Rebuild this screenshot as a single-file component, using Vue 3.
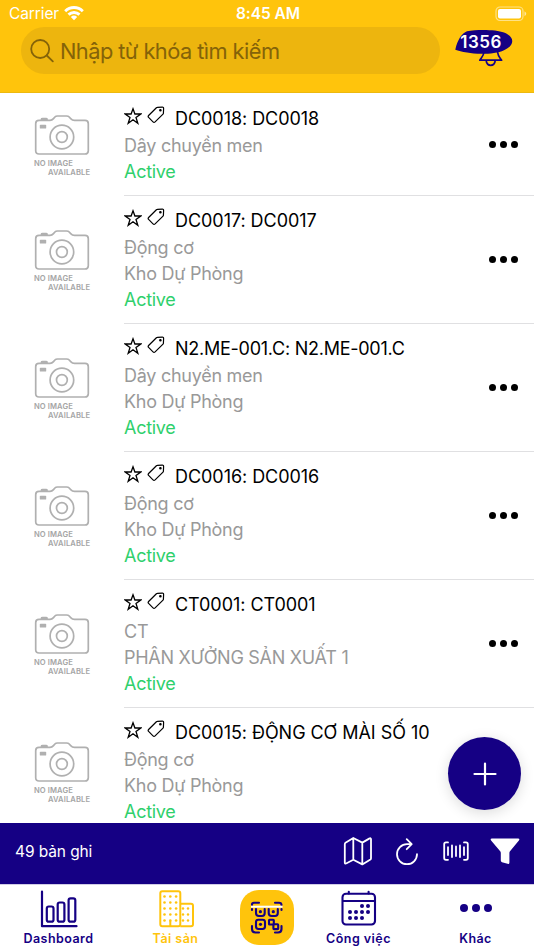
<script setup>
const assets = [
  { title: 'DC0018: DC0018', lines: ['Dây chuyền men'] },
  { title: 'DC0017: DC0017', lines: ['Động cơ', 'Kho Dự Phòng'] },
  { title: 'N2.ME-001.C: N2.ME-001.C', lines: ['Dây chuyền men', 'Kho Dự Phòng'], tight: true },
  { title: 'DC0016: DC0016', lines: ['Động cơ', 'Kho Dự Phòng'] },
  { title: 'CT0001: CT0001', lines: ['CT', 'PHÂN XƯỞNG SẢN XUẤT 1'] },
  { title: 'DC0015: ĐỘNG CƠ MÀI SỐ 10', lines: ['Động cơ', 'Kho Dự Phòng'] }
]
const towerDots = [6.5, 12.5, 18.5, 24.5, 30.5]
const annexDots = [18.5, 24.5, 30.5]
const calendarDots = [[21, 15.5], [27, 15.5], [9, 21.5], [15, 21.5], [21, 21.5], [27, 21.5], [9, 27.5], [15, 27.5], [21, 27.5]]
</script>

<template>
  <div class="screen">
    <header class="header">
      <div class="status">
        <div class="carrier">
          <span>Carrier</span>
          <svg width="20" height="15" viewBox="0 0 20 15" fill="none" stroke="#fff" stroke-width="2.9">
            <path d="M1.2 5.2C6.2.3 13.8.3 18.8 5.2" />
            <path d="M4.5 8.6C7.6 5.7 12.4 5.7 15.5 8.6" />
            <path d="M10 14.2 6.8 10.9Q10 8.3 13.2 10.9Z" fill="#fff" stroke="none" />
          </svg>
        </div>
        <span class="time">8:45 AM</span>
        <svg class="battery" width="32" height="16" viewBox="0 0 32 16">
          <rect x="1" y="1" width="27" height="13.5" rx="4" fill="none" stroke="#fff" stroke-opacity=".5" stroke-width="1.2" />
          <rect x="3" y="3" width="23" height="9.5" rx="2" fill="#fff" />
          <path d="M29.5 5.2Q33 7.7 29.5 10.2Z" fill="#fff" fill-opacity=".6" />
        </svg>
      </div>
      <div class="search-row">
        <div class="search">
          <svg width="24" height="24" viewBox="0 0 24 24" fill="none" stroke="#846309" stroke-width="1.8" stroke-linecap="round">
            <circle cx="10.2" cy="10" r="9" />
            <path d="m16.8 16.5 6 5.9" />
          </svg>
          <span>Nhập từ khóa tìm kiếm</span>
        </div>
        <div class="bell">
          <svg width="60" height="40" viewBox="0 0 60 40">
            <path d="M29 25C28.5 29 27 30 24.8 33.2H46.6C44.3 30 43 29 42.5 25M31.2 34C32.2 39.7 39.2 39.7 40.2 34" fill="none" stroke="#150084" stroke-width="1.7" stroke-linejoin="round" />
            <path d="M.3 22.7C2.5 12.5 7 6 12 4.2C22 2.4 41 2.4 49 5.5C60 9.7 60 18.5 49 23.2C40 27.5 22 27.5 12 25.6C7 24.7 3.5 23.8 .3 22.7Z" fill="#150084" />
          </svg>
          <span class="count">1356</span>
        </div>
      </div>
    </header>

    <main class="list">
      <article v-for="asset in assets" :key="asset.title" class="asset">
        <div class="thumb">
          <svg width="56" height="41" viewBox="0 0 56 41" fill="none" stroke="#b0b0b0" stroke-width="1.7">
            <path d="M5 5.4H16Q18 5.4 19.5 3.6L20.9 2Q21.8 1 23.5 1H32.5Q34.3 1 35.2 2L36.7 3.6Q38.3 5.4 40.5 5.4H51Q54.3 5.4 54.3 8.7V35.7Q54.3 39 51 39H5Q1.7 39 1.7 35.7V8.7Q1.7 5.4 5 5.4Z" />
            <circle cx="27.9" cy="22" r="11.8" />
            <circle cx="27.9" cy="22" r="5.4" />
            <path d="M7.5 5V4Q7.5 3.5 8.5 3.5H12Q13 3.5 13 4V5Z" fill="#b0b0b0" />
            <rect x="5.8" y="9.8" width="6.4" height="3.8" rx=".7" fill="#b0b0b0" stroke="none" />
          </svg>
          <div class="no-image">NO IMAGE</div>
          <div class="no-image available">AVAILABLE</div>
        </div>
        <div class="body">
          <div class="info">
            <div class="title-row">
              <svg class="star" width="18" height="18" viewBox="0 0 18 18" fill="none" stroke="#000" stroke-width="1.3" stroke-linejoin="miter">
                <path d="M9 1.8 10.9 7H16.8L12 10.5 13.8 16.2 9 12.7 4.2 16.2 6 10.5 1.2 7H7.1Z" />
              </svg>
              <svg class="tag" width="18" height="18" viewBox="0 0 18 18" fill="none" stroke="#000" stroke-width="1.2" stroke-linejoin="round">
                <path d="M10.2 1.4 15.3 1.1Q16.6 1 16.6 2.4L16.4 7.2Q16.4 7.7 16 8.1L8.1 15.9Q7 16.9 6 15.9L1.6 11.4Q.7 10.4 1.6 9.5L9.4 1.8Q9.7 1.4 10.2 1.4Z" />
                <circle cx="13.4" cy="4.3" r=".7" fill="#000" />
              </svg>
              <span class="title" :class="{ tight: asset.tight }">{{ asset.title }}</span>
            </div>
            <div v-for="line in asset.lines" :key="line" class="line">{{ line }}</div>
            <div class="line active">Active</div>
          </div>
          <div class="more"><i /><i /><i /></div>
        </div>
      </article>
      <button class="add" aria-label="+">
        <svg width="24" height="24" viewBox="0 0 24 24" stroke="#fff" stroke-width="2.2" stroke-linecap="round">
          <path d="M12 1.5V22.5M1.5 12H22.5" />
        </svg>
      </button>
    </main>

    <div class="toolbar">
      <span class="records">49 bản ghi</span>
      <div class="tools">
        <svg class="map" width="30" height="30" viewBox="0 0 30 30" fill="none" stroke="#fff" stroke-width="1.8" stroke-linejoin="round">
          <path d="M1.8 8.2Q1.8 7.3 2.5 6.8L10.3 2 19.3 6.6 26.2 2.6Q28 1.6 28 3.2V22.2Q28 23 27.4 23.4L19.3 28.4 10.3 23.8 3.6 27.3Q1.8 28.2 1.8 26.6ZM10.3 2V23.8M19.3 6.6V28" />
        </svg>
        <svg class="refresh" width="24" height="30" viewBox="0 0 24 30" fill="none" stroke="#fff" stroke-width="1.8" stroke-linecap="round" stroke-linejoin="round">
          <path d="M16.3 8.2H12A10 10 0 1 0 22 18.2M11.7 3.2 16.7 8.2 11.7 13.2" />
        </svg>
        <svg class="barcode" width="26" height="30" viewBox="0 0 26 30" fill="none" stroke="#fff" stroke-width="1.8" stroke-linecap="round" stroke-linejoin="round">
          <path d="M5 6.4H3Q1.2 6.4 1.2 8.2V22Q1.2 23.8 3 23.8H5M21 6.4H23Q24.8 6.4 24.8 8.2V22Q24.8 23.8 23 23.8H21M5 11.2V19M9 9.5V21M13 10.4V20M17 9.5V21M21 11.2V19" />
        </svg>
        <svg width="30" height="30" viewBox="0 0 30 30" fill="#fff">
          <path d="M2 2.5H28Q30.2 2.6 28.9 4.4L20 15.3Q19.4 16.1 19.4 17V26.4Q19.4 28.3 17.6 27.8L12 26.2Q10.8 25.8 10.8 24.6V17Q10.8 16.1 10.2 15.3L1.1 4.4Q-.2 2.6 2 2.5Z" />
        </svg>
      </div>
    </div>

    <nav class="tabs">
      <div class="tab dashboard">
        <svg width="38" height="38" viewBox="0 0 38 38" fill="none" stroke="#150084" stroke-width="2.2" stroke-linecap="round" stroke-linejoin="round">
          <path d="M2 1.5V36.2H36.5" />
          <rect x="6.8" y="16.5" width="6.7" height="15.2" rx="2" />
          <rect x="17.7" y="12.5" width="6.7" height="19.2" rx="2" />
          <rect x="28.6" y="8.3" width="6.7" height="23.4" rx="2" />
        </svg>
        <span>Dashboard</span>
      </div>
      <div class="tab building">
        <svg width="36" height="38" viewBox="0 0 36 38" fill="none" stroke="#ffc40c" stroke-width="2" stroke-linejoin="round">
          <rect x="2.3" y="1.3" width="20" height="35" rx="2" />
          <path d="M22.3 13.8H33Q35 13.8 35 15.8V34.3Q35 36.3 33 36.3H22.3M12.3 31V36" />
          <g fill="#ffc40c" stroke="none">
            <template v-for="y in towerDots" :key="y">
              <circle cx="6.5" :cy="y" r="1.3" />
              <circle cx="12.3" :cy="y" r="1.3" />
              <circle cx="18.1" :cy="y" r="1.3" />
            </template>
            <template v-for="y in annexDots" :key="'a' + y">
              <circle cx="25" :cy="y" r="1.2" />
              <circle cx="30" :cy="y" r="1.2" />
            </template>
          </g>
        </svg>
        <span>Tài sản</span>
      </div>
      <div class="scan">
        <svg width="34" height="34" viewBox="0 0 34 34" fill="none" stroke="#150084" stroke-width="2.1" stroke-linecap="round">
          <path d="M2 4V3.5Q2 1.7 4 1.7H9M25 1.7H29Q31.5 1.7 31.5 4M2 8V9M31.5 8V9M2 25V28Q2 31.5 5.5 31.5H9M25 31.5H28Q31.5 31.5 31.5 28V25" />
          <path d="M1 5.7H32.5" stroke="#fff" stroke-width="2" stroke-linecap="butt" />
          <path d="M6 8V12Q6 15 9 15H12Q14.7 15 14.7 12V8M18.7 8V12Q18.7 15 21.7 15H25Q27.8 15 27.8 12V8" />
          <rect x="6" y="18.7" width="9" height="9.3" rx="2.4" />
          <rect x="19" y="18.7" width="4.8" height="4.8" rx=".6" />
          <rect x="23.4" y="23.3" width="4.8" height="4.8" rx=".6" />
          <g fill="#150084" stroke="none">
            <circle cx="10.4" cy="10.7" r="1.6" /><circle cx="23.3" cy="10.7" r="1.6" /><circle cx="10.5" cy="23.3" r="1.6" />
          </g>
        </svg>
      </div>
      <div class="tab work">
        <svg width="36" height="36" viewBox="0 0 36 36" fill="none" stroke="#150084" stroke-width="2.1" stroke-linecap="round">
          <rect x="1.5" y="3.8" width="32.5" height="30.7" rx="3.5" />
          <path d="M2 11H34M7.8 1.7V3.5M27.6 1.7V3.5" />
          <g fill="#150084" stroke="none">
            <circle v-for="[x, y] in calendarDots" :key="x + '-' + y" :cx="x" :cy="y + 0.6" r="2" />
          </g>
        </svg>
        <span>Công việc</span>
      </div>
      <div class="tab other">
        <div class="dots"><i /><i /><i /></div>
        <span>Khác</span>
      </div>
    </nav>
  </div>
</template>

<style>
body { margin: 0; }
</style>

<style scoped>
.screen { width: 534px; height: 950px; display: flex; flex-direction: column; overflow: hidden; background: #fff; font-family: Inter, "Noto Sans", sans-serif; color: #000; }
.header { height: 93px; flex: none; background: #ffc40c; box-sizing: border-box; border-bottom: 1px solid #edb90f; color: #fff; }
.status { height: 27px; display: grid; grid-template-columns: 1fr auto 1fr; align-items: center; padding: 0 7px 0 9px; font-size: 15.5px; }
.carrier { display: flex; align-items: center; gap: 5px; letter-spacing: -.1px; }
.time { font-weight: 600; letter-spacing: -.05px; }
.battery { justify-self: end; }
.search-row { display: flex; padding-left: 21px; gap: 15px; }
.search { width: 419px; height: 47px; box-sizing: border-box; border-radius: 24px; background: #edb50e; color: #846309; display: flex; align-items: center; gap: 6px; padding-left: 9px; font-size: 21.8px; letter-spacing: -.55px; }
.bell { position: relative; width: 60px; height: 40px; }
.bell svg { display: block; }
.count { position: absolute; left: 4px; top: 3px; width: 44px; text-align: center; font-size: 17px; line-height: 24px; font-weight: 600; letter-spacing: .5px; }
.list { height: 730px; flex: none; overflow: hidden; position: relative; padding-top: 1px; box-sizing: border-box; }
.asset { display: flex; }
.thumb { width: 124px; flex: none; box-sizing: border-box; padding-left: 34px; display: flex; flex-direction: column; justify-content: center; padding-top: 1px; }
.thumb svg { display: block; margin-bottom: 3px; }
.no-image { font-size: 7.6px; line-height: 9px; color: #a5a5a5; font-weight: 600; white-space: nowrap; letter-spacing: .1px; }
.available { padding-left: 14px; }
.body { flex: 1; display: flex; align-items: center; border-bottom: 1px solid #e0e0e2; box-sizing: border-box; padding: 10px 16px 10px 0; }
.info { flex: 1; }
.title-row { display: flex; height: 29px; }
.star { margin-top: 3px; }
.tag { margin: 2px 0 0 5px; }
.title { margin-left: 10px; font-size: 18px; line-height: 30px; white-space: nowrap; letter-spacing: -.05px; }
.title.tight { letter-spacing: -.25px; }
.line { font-size: 18px; line-height: 26px; height: 26px; color: #999; white-space: nowrap; letter-spacing: -.27px; }
.asset .active { color: #2fd06c; }
.more { display: flex; gap: 3.5px; }
.more i { width: 7.5px; height: 7.5px; border-radius: 50%; background: #000; }
.add { position: absolute; right: 13px; bottom: 13px; width: 73px; height: 73px; border: 0; border-radius: 50%; background: #150084; display: flex; align-items: center; justify-content: center; padding: 0; box-shadow: 0 3px 14px rgba(0, 0, 0, .14); }
.toolbar { height: 61px; flex: none; background: #150084; color: #fff; display: flex; align-items: center; justify-content: space-between; padding: 0 14px 4px 15px; box-sizing: border-box; }
.records { font-size: 15.5px; letter-spacing: -.1px; }
.tools { display: flex; align-items: center; padding-bottom: 1px; }
.map { margin-right: 22px; }
.refresh { margin-right: 24px; }
.barcode { margin-right: 21px; }
.tabs { height: 66px; flex: none; display: flex; color: #150084; border-top: 1px solid #d0cce5; box-sizing: border-box; }
.tab { width: 117px; display: flex; flex-direction: column; align-items: center; justify-content: space-between; padding: 5px 0 2px; box-sizing: border-box; height: 65px; font-size: 12.5px; line-height: 18px; font-weight: 600; letter-spacing: .45px; }
.building { color: #ffc40c; }
.scan { width: 54px; height: 55px; margin: 5px 6px 0; border-radius: 19px; background: #ffc40c; display: flex; align-items: center; justify-content: center; }
.dots { display: flex; gap: 4px; padding-top: 14px; }
.dots i { width: 8px; height: 8px; border-radius: 50%; background: #150084; }
</style>
